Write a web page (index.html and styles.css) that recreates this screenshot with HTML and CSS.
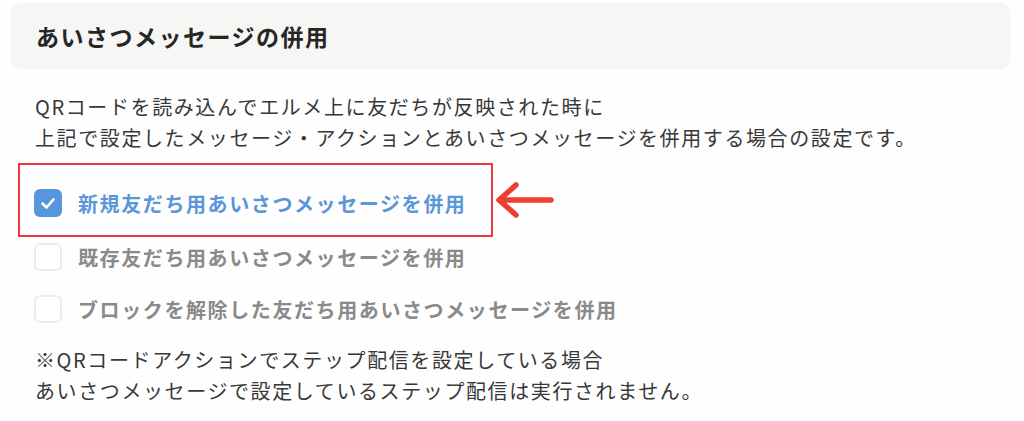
FILE: index.html
```html
<!DOCTYPE html>
<html lang="ja">
<head>
<meta charset="utf-8">
<link rel="stylesheet" href="styles.css">
</head>
<body>
<div class="page">
  <div class="header"><h2 class="title">あいさつメッセージの併用</h2></div>
  <p class="desc">QRコードを読み込んでエルメ上に友だちが反映された時に<br>上記で設定したメッセージ・アクションとあいさつメッセージを併用する場合の設定です。</p>
  <div class="highlight-row">
    <div class="highlight">
      <label class="opt checked"><span class="box"><svg viewBox="0 0 28 28" width="28" height="28"><path d="M8.5 14.5l4 4 7-8" fill="none" stroke="#fff" stroke-width="2.6" stroke-linecap="round" stroke-linejoin="round"/></svg></span><span class="label">新規友だち用あいさつメッセージを併用</span></label>
    </div>
    <svg class="arrow" viewBox="0 0 62 40" width="62" height="40"><path d="M57 20H6M22 5L5 20l17 15" fill="none" stroke="#ee3f35" stroke-width="5.5" stroke-linecap="round" stroke-linejoin="round"/></svg>
  </div>
  <label class="opt plain"><span class="box"></span><span class="label">既存友だち用あいさつメッセージを併用</span></label>
  <label class="opt plain"><span class="box"></span><span class="label">ブロックを解除した友だち用あいさつメッセージを併用</span></label>
  <p class="note">※QRコードアクションでステップ配信を設定している場合<br>あいさつメッセージで設定しているステップ配信は実行されません。</p>
</div>
</body>
</html>
```
FILE: styles.css
```css
* { box-sizing: border-box; }
html, body { margin: 0; padding: 0; background: #fefefe; }
body {
  font-family: "Noto Sans CJK JP", "Noto Sans", sans-serif;
  color: #3a3a3a;
  width: 1024px;
  height: 421px;
  overflow: hidden;
}
.page {
  padding: 3px 14px 0 11px;
  display: flex;
  flex-direction: column;
}
.header {
  height: 66px;
  background: #f6f6f4;
  border-radius: 9px;
  display: flex;
  align-items: center;
  padding-left: 25px;
}
.title {
  margin: 0;
  font-size: 23px;
  font-weight: 700;
  letter-spacing: 1.5px;
  color: #262626;
}
.desc, .note {
  margin: 0;
  padding-left: 24px;
  font-size: 20px;
  line-height: 31px;
  letter-spacing: 1.6px;
  color: #383838;
}
.desc { margin-top: 22px; }
.highlight-row {
  display: flex;
  align-items: center;
  gap: 1px;
  margin-top: 10px;
  margin-left: 7px;
}
.highlight {
  width: 475px;
  height: 74px;
  border: 2px solid #ee3a3a;
  padding: 24px 0 0 14px;
}
.opt {
  display: flex;
  align-items: center;
  gap: 16px;
  font-size: 20px;
  font-weight: 700;
  letter-spacing: 1.6px;
  height: 28px;
}
.box {
  width: 28px;
  height: 28px;
  border-radius: 6px;
  flex: none;
  display: flex;
}
.checked .box { background: #5596dd; }
.checked .label { color: #5a96d8; }
.plain { margin-left: 23px; margin-top: 6px; }
.plain + .plain { margin-top: 24px; }
.plain .box { border: 2px solid #ececec; background: #fff; }
.plain .label { color: #8a8a8a; }
.note { margin-top: 21px; }
```
